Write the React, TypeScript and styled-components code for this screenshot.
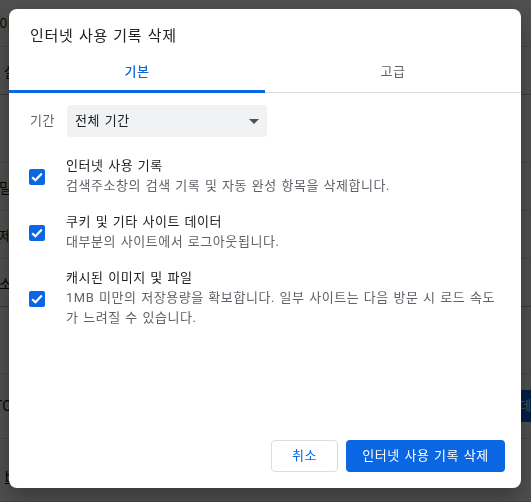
import React from 'react'
import styled, { createGlobalStyle } from 'styled-components'

const FONT = `Roboto, "Noto Sans CJK KR", "Noto Sans", sans-serif`
const BLUE = '#0b66e4'

const GlobalStyle = createGlobalStyle`
    html, body {
        margin: 0;
        height: 100%;
        overflow: hidden;
        background: #fff;
        font-family: ${FONT};
    }
    * {
        box-sizing: border-box;
    }
`

const bgRows = [
    { height: 47, text: '이' },
    { height: 48, text: '살', indent: 4, strong: true },
    { height: 68, text: '' },
    { height: 48, text: '밀' },
    { height: 48, text: '제' },
    { height: 48, text: '소', strong: true },
    { height: 67, text: '' },
    { height: 65, text: 'TO', indent: -6, action: '데이터 관리' },
    { height: 63, text: 'b', indent: 5, underline: true, pushDown: 14 },
]

const deleteOptions = [
    { title: '인터넷 사용 기록', desc: '검색주소창의 검색 기록 및 자동 완성 항목을 삭제합니다.' },
    { title: '쿠키 및 기타 사이트 데이터', desc: '대부분의 사이트에서 로그아웃됩니다.' },
    {
        title: '캐시된 이미지 및 파일',
        desc: '1MB 미만의 저장용량을 확보합니다. 일부 사이트는 다음 방문 시 로드 속도가 느려질 수 있습니다.',
    },
]

export default function App() {
    return (
        <>
            <GlobalStyle />
            <Page>
                {bgRows.map((row, i) => (
                    <BgRow key={i} $height={row.height} $strong={row.strong}>
                        <BgText $underline={row.underline} $indent={row.indent} $pushDown={row.pushDown}>
                            {row.text}
                        </BgText>
                        {row.action && <BgButton>{row.action}</BgButton>}
                    </BgRow>
                ))}
            </Page>
            <Overlay>
                <Dialog>
                    <Title>인터넷 사용 기록 삭제</Title>
                    <Tabs>
                        <Tab $active>기본</Tab>
                        <Tab>고급</Tab>
                    </Tabs>
                    <Body>
                        <PeriodRow>
                            <PeriodLabel>기간</PeriodLabel>
                            <Select>
                                전체 기간
                                <SelectArrow width="10" height="5" viewBox="0 0 10 5">
                                    <path d="M0 0h10L5 5z" fill="#4c5053" />
                                </SelectArrow>
                            </Select>
                        </PeriodRow>
                        <OptionList>
                            {deleteOptions.map((opt) => (
                                <Option key={opt.title}>
                                    <CheckBox>
                                        <svg width="12" height="10" viewBox="0 0 12 10">
                                            <path
                                                d="M1.2 5.2L4.4 8.3L10.8 1.6"
                                                fill="none"
                                                stroke="#fff"
                                                strokeWidth="2.2"
                                            />
                                        </svg>
                                    </CheckBox>
                                    <OptionText>
                                        <OptionTitle>{opt.title}</OptionTitle>
                                        <OptionDesc>{opt.desc}</OptionDesc>
                                    </OptionText>
                                </Option>
                            ))}
                        </OptionList>
                    </Body>
                    <Footer>
                        <CancelButton>취소</CancelButton>
                        <ConfirmButton>인터넷 사용 기록 삭제</ConfirmButton>
                    </Footer>
                </Dialog>
            </Overlay>
        </>
    )
}

const Page = styled.div`
    height: 502px;
    overflow: hidden;
    background: #fff;
`

const BgRow = styled.div<{ $height: number; $strong?: boolean }>`
    height: ${(props) => props.$height}px;
    display: flex;
    align-items: center;
    justify-content: space-between;
    border-bottom: 1px solid ${(props) => (props.$strong ? '#b4b4b4' : '#e2e2e2')};
`

const BgText = styled.div<{ $underline?: boolean; $indent?: number; $pushDown?: number }>`
    font-size: 14px;
    color: #111;
    margin-left: ${(props) => props.$indent ?? -1}px;
    margin-top: ${(props) => props.$pushDown ?? 0}px;
    text-decoration: ${(props) => (props.$underline ? 'underline' : 'none')};
`

const BgButton = styled.div`
    height: 32px;
    width: 110px;
    margin-right: -90px;
    padding-left: 8px;
    line-height: 32px;
    font-size: 13px;
    white-space: nowrap;
    overflow: hidden;
    color: #fff;
    background: #0066e0;
`

const Overlay = styled.div`
    position: fixed;
    inset: 0;
    display: flex;
    padding: 9px 10px 14px 9px;
    background: rgba(0, 0, 0, 0.69);
`

const Dialog = styled.div`
    flex: 1;
    display: flex;
    flex-direction: column;
    letter-spacing: 0.55px;
    word-spacing: 0.85px;
    background: #fff;
    border-radius: 8px;
    box-shadow: 0 10px 24px rgba(0, 0, 0, 0.3);
`

const Title = styled.div`
    padding: 17px 21px 0;
    height: 38px;
    line-height: 20px;
    font-size: 15px;
    letter-spacing: 0.7px;
    word-spacing: 1px;
    color: #202124;
`

const Tabs = styled.div`
    display: flex;
    height: 46px;
    border-bottom: 1px solid #dadce0;
`

const Tab = styled.div<{ $active?: boolean }>`
    flex: 1;
    display: flex;
    align-items: center;
    justify-content: center;
    margin-bottom: -1px;
    padding-top: 3px;
    font-size: 13px;
    font-weight: ${(props) => (props.$active ? 500 : 400)};
    color: ${(props) => (props.$active ? BLUE : '#5f6368')};
    border-bottom: 3px solid ${(props) => (props.$active ? BLUE : 'transparent')};
`

const Body = styled.div`
    flex: 1;
    padding: 12px 16px 0 20px;
`

const PeriodRow = styled.div`
    display: flex;
    align-items: center;
`

const PeriodLabel = styled.div`
    width: 38px;
    padding: 0 0 3px 1px;
    font-size: 13px;
    color: #5f6368;
`

const Select = styled.div`
    width: 200px;
    height: 32px;
    display: flex;
    align-items: center;
    justify-content: space-between;
    padding: 0 8px 4px 8px;
    border-radius: 4px;
    background: #f0f2f3;
    font-size: 13px;
    color: #202124;
`

const SelectArrow = styled.svg`
    margin-top: 4px;
`

const OptionList = styled.div`
    display: flex;
    flex-direction: column;
    gap: 15px;
    margin-top: 18px;
`

const Option = styled.div`
    display: flex;
    align-items: center;
    min-height: 41px;
`

const CheckBox = styled.div`
    flex: none;
    width: 16px;
    height: 16px;
    margin-top: 3px;
    display: flex;
    align-items: center;
    justify-content: center;
    border-radius: 2px;
    background: ${BLUE};
`

const OptionText = styled.div`
    margin-left: 21px;
    font-size: 13px;
`

const OptionTitle = styled.div`
    line-height: 21px;
    color: #202124;
`

const OptionDesc = styled.div`
    line-height: 20px;
    color: #5f6368;
`

const Footer = styled.div`
    display: flex;
    justify-content: flex-end;
    gap: 8px;
    padding: 0 16px 16px 0;
`

const CancelButton = styled.button`
    width: 67px;
    height: 32px;
    padding: 0 0 3px;
    border: 1px solid #dadce0;
    border-radius: 4px;
    background: #fff;
    font: 400 13px ${FONT};
    letter-spacing: 0.55px;
    color: ${BLUE};
`

const ConfirmButton = styled.button`
    width: 159px;
    height: 32px;
    padding: 0 0 3px;
    border: none;
    border-radius: 4px;
    background: ${BLUE};
    font: 400 13px ${FONT};
    letter-spacing: 0.55px;
    word-spacing: 0.85px;
    color: #fff;
`
